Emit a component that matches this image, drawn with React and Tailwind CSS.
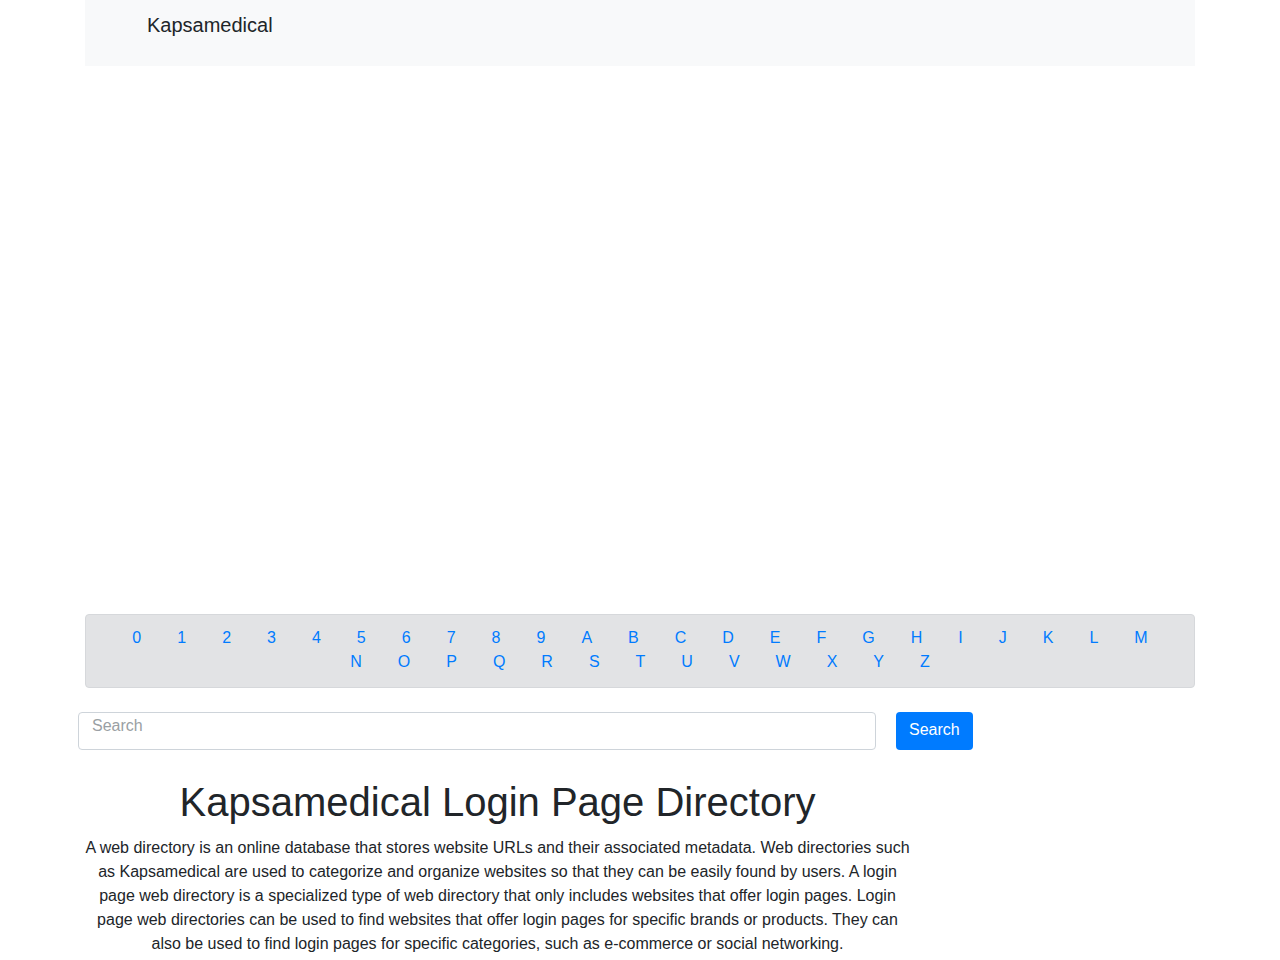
import React from 'react';

const chars = '0123456789ABCDEFGHIJKLMNOPQRSTUVWXYZ'.split('');

const App = () => {
  return (
    <div className="min-h-screen bg-white text-[#212529] text-base leading-6" style={{ fontFamily: '"Liberation Sans", Arial, sans-serif' }}>
      <div className="w-[1110px] mx-auto">
        <nav className="bg-[#f8f9fa] h-[66px] pl-[62px] pt-[10px]">
          <a href="#" className="text-xl leading-[30px] text-[#212529]">Kapsamedical</a>
        </nav>

        <div className="h-[548px]"></div>

        <div className="bg-[#e2e3e5] border border-[#d6d8db] rounded px-5 pt-[11px] pb-[13px] text-center">
          <div className="flex flex-wrap justify-center px-[8px]">
            {chars.map((c) => (
              <a key={c} href="#" className="text-[#007bff] px-[18px] leading-6">{c}</a>
            ))}
          </div>
        </div>

        <form className="flex items-start mt-6 -ml-[7px]">
          <input
            type="text"
            placeholder="Search"
            className="w-[798px] h-[38px] border border-[#ced4da] rounded px-[13px] pb-[10px] text-base placeholder-[#9a9fa4] focus:outline-none"
          />
          <button type="button" className="ml-5 h-[38px] px-[13px] pb-[2px] bg-[#007bff] text-white rounded text-base">Search</button>
        </form>

        <div className="w-[825px] text-center mt-[28px]">
          <h1 className="text-[40px] leading-[48px] font-normal mb-[10px]">Kapsamedical Login Page Directory</h1>
          <p className="leading-6">
            A web directory is an online database that stores website URLs and their associated metadata. Web directories such as Kapsamedical are used to categorize and organize websites so that they can be easily found by users. A login page web directory is a specialized type of web directory that only includes websites that offer login pages. Login page web directories can be used to find websites that offer login pages for specific brands or products. They can also be used to find login pages for specific categories, such as e-commerce or social networking.
          </p>
        </div>
      </div>
    </div>
  );
};

export default App;
